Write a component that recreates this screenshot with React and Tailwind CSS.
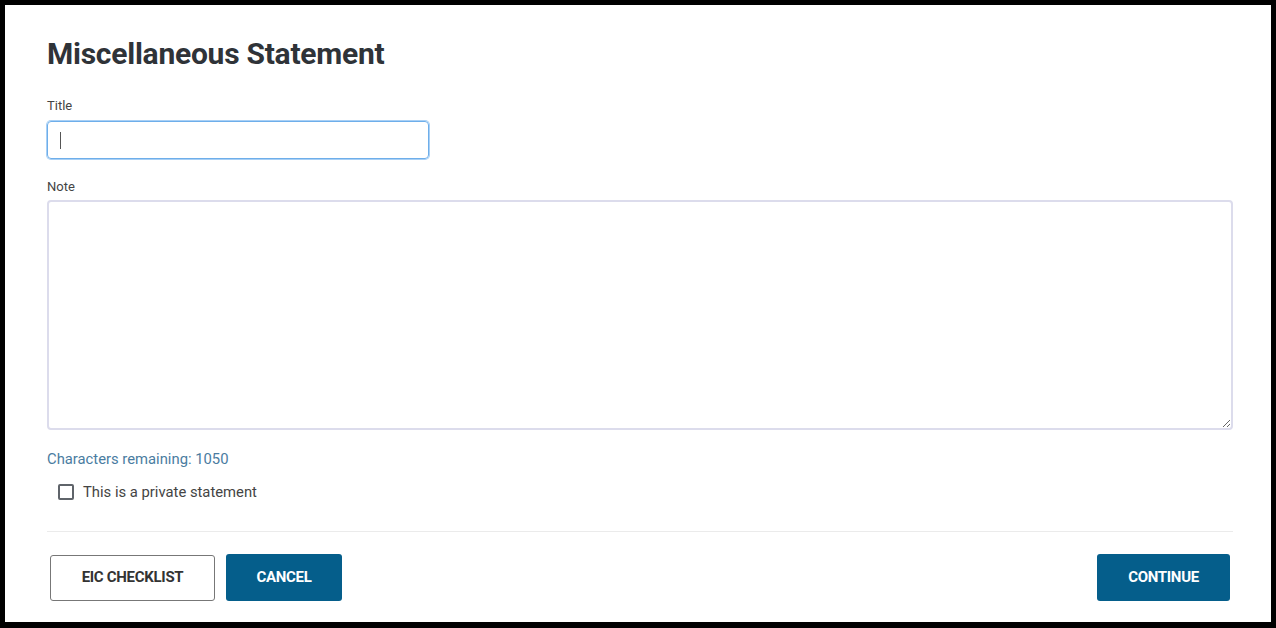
export default function App() {
  return (
    <div className="w-[1276px] h-[628px] box-border border-[5px] border-b-[6px] border-black bg-white font-['Roboto',sans-serif]">
      <div className="pl-[42px] pr-[38px] pt-[33px]">
        {/* Heading */}
        <h1 className="text-[30px] leading-[32px] font-bold text-[#2f3338] tracking-[-0.25px]">
          Miscellaneous Statement
        </h1>

        {/* Title field */}
        <label className="block mt-[28px] text-[13px] leading-[16px] text-[#444]">Title</label>
        <div className="mt-[7px] w-[382px] h-[38px] rounded-[4px] border border-[#6eaeea] shadow-[0_0_0_1px_#a9d0f5] flex items-center pl-[12px]">
          <span className="block w-px h-[17px] bg-[#555]"></span>
        </div>

        {/* Note field */}
        <label className="block mt-[20px] text-[13px] leading-[16px] text-[#444]">Note</label>
        <textarea
          className="block mt-[5px] w-full h-[230px] rounded-[4px] border-2 border-[#dcdcec] outline-none"
          defaultValue=""
        />

        <p className="mt-[19px] text-[14.8px] leading-[20px] text-[#4a7ca1]">Characters remaining: 1050</p>

        <div className="mt-[13px] ml-[11px] flex items-center gap-[9px] h-[20px]">
          <span className="block w-[16px] h-[16px] rounded-[2px] border-2 border-[#5f646a]"></span>
          <span className="text-[14.8px] text-[#444]">This is a private statement</span>
        </div>

        <div className="mt-[29px] h-px bg-[#ebebeb]"></div>

        {/* Actions */}
        <div className="mt-[22px] mx-[3px] flex items-center">
          <button className="w-[165px] h-[46px] rounded-[3px] border border-[#777] bg-white text-[15px] font-bold text-[#333] tracking-[-0.3px]">
            EIC CHECKLIST
          </button>
          <button className="ml-[11px] w-[116px] h-[47px] rounded-[3px] bg-[#055e8b] text-[15px] font-bold text-white tracking-[-0.3px]">
            CANCEL
          </button>
          <button className="ml-auto w-[133px] h-[47px] rounded-[3px] bg-[#055e8b] text-[15px] font-bold text-white tracking-[-0.3px]">
            CONTINUE
          </button>
        </div>
      </div>
    </div>
  );
}
